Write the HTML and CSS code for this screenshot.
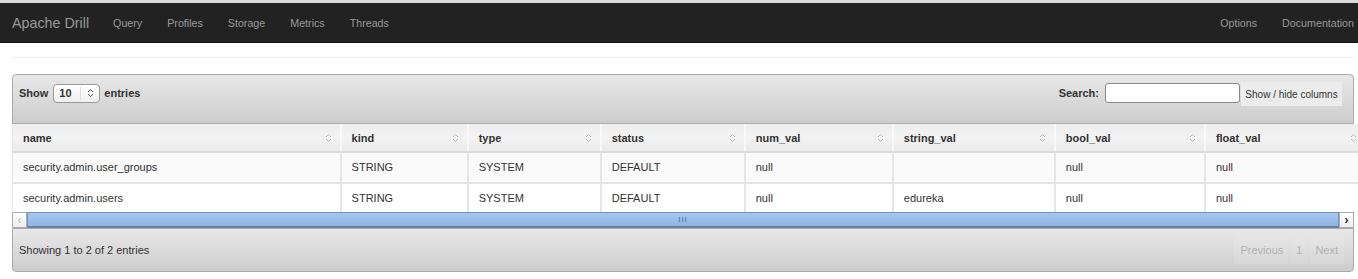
FILE: index.html
```html
<!DOCTYPE html>
<html lang="en">
<head>
    <meta charset="UTF-8">
    <title>Apache Drill - Options</title>
    <link rel="stylesheet" href="styles.css">
</head>
<body>
    <div class="navbar">
        <a class="brand" href="#">Apache Drill</a>
        <ul class="nav">
            <li><a href="#">Query</a></li>
            <li><a href="#">Profiles</a></li>
            <li><a href="#">Storage</a></li>
            <li><a href="#">Metrics</a></li>
            <li><a href="#">Threads</a></li>
        </ul>
        <ul class="nav nav-right">
            <li><a href="#">Options</a></li>
            <li><a href="#">Documentation</a></li>
        </ul>
    </div>

    <div class="container">
        <hr class="rule">

        <div class="dt-wrapper">
            <div class="toolbar toolbar-top">
                <div class="length">
                    <span>Show</span>
                    <span class="select">
                        <span class="select-value">10</span>
                        <span class="select-arrow">
                            <svg width="7" height="10" viewBox="0 0 7 10"><path d="M1 4 L3.5 1.5 L6 4 M1 6 L3.5 8.5 L6 6" stroke="#555" stroke-width="1" fill="none"/></svg>
                        </span>
                    </span>
                    <span>entries</span>
                </div>
                <div class="filter">
                    <label>Search:</label>
                    <input type="text" class="search">
                    <button class="colvis">Show / hide columns</button>
                </div>
            </div>

            <div class="scroll-body">
                <table class="options">
                    <thead>
                        <tr>
                            <th class="c-name">name<i class="sort"></i></th>
                            <th class="c-kind">kind<i class="sort"></i></th>
                            <th class="c-type">type<i class="sort"></i></th>
                            <th class="c-status">status<i class="sort"></i></th>
                            <th class="c-num">num_val<i class="sort"></i></th>
                            <th class="c-string">string_val<i class="sort"></i></th>
                            <th class="c-bool">bool_val<i class="sort"></i></th>
                            <th class="c-float">float_val<i class="sort"></i></th>
                        </tr>
                    </thead>
                    <tbody>
                        <tr class="odd">
                            <td>security.admin.user_groups</td>
                            <td>STRING</td>
                            <td>SYSTEM</td>
                            <td>DEFAULT</td>
                            <td>null</td>
                            <td></td>
                            <td>null</td>
                            <td>null</td>
                        </tr>
                        <tr class="even">
                            <td>security.admin.users</td>
                            <td>STRING</td>
                            <td>SYSTEM</td>
                            <td>DEFAULT</td>
                            <td>null</td>
                            <td>edureka</td>
                            <td>null</td>
                            <td>null</td>
                        </tr>
                    </tbody>
                </table>
            </div>

            <div class="hscroll">
                <span class="hs-btn hs-left">&lsaquo;</span>
                <span class="hs-thumb"><span class="grip">III</span></span>
                <span class="hs-btn hs-right">&rsaquo;</span>
            </div>

            <div class="toolbar toolbar-bottom">
                <div class="info">Showing 1 to 2 of 2 entries</div>
                <div class="paginate">
                    <span class="pg">Previous</span><span class="pg">1</span><span class="pg">Next</span>
                </div>
            </div>
        </div>
    </div>

    <script>
        // sort icons are the same everywhere, fill them in once
        document.querySelectorAll('.sort').forEach(function(el) {
            el.innerHTML = '<svg width="7" height="10" viewBox="0 0 7 10"><path d="M1 4 L3.5 1.5 L6 4 M1 6 L3.5 8.5 L6 6" stroke="#bbb" stroke-width="1" fill="none"/></svg>';
        });
    </script>
</body>
</html>
```

FILE: styles.css
```css
html, body {
    margin: 0;
    padding: 0;
    overflow: hidden;
}
body {
    font-family: 'Liberation Sans', Arial, Helvetica, sans-serif;
    font-size: 11px;
    color: #333;
    background-color: #fff;
    border-top: 3px solid #dcdcdc;
}
.navbar {
    display: flex;
    align-items: center;
    height: 40px;
    background-color: #222;
    border-bottom: 1px solid #111;
    box-sizing: border-box;
    padding: 0 4px 0 12px;
}
.brand {
    color: #999;
    font-size: 14.3px;
    text-decoration: none;
    margin-right: 11.5px;
}
.nav {
    display: flex;
    list-style: none;
    margin: 0;
    padding: 0;
}
.nav li a {
    display: block;
    color: #999;
    text-decoration: none;
    font-size: 10.7px;
    padding: 0 12.5px;
}
.nav-right {
    margin-left: auto;
}
.nav-right li:last-child a {
    padding-right: 0;
}
.container {
    padding: 0 4px 0 12px;
}
.rule {
    border: 0;
    border-top: 1px solid #eee;
    margin: 14px 0 16px;
}
.dt-wrapper {
    width: 1342px;
}
.toolbar {
    display: flex;
    justify-content: space-between;
    border: 1px solid #aaa;
    background: linear-gradient(#e8e8e8, #cdcdcd);
    box-sizing: border-box;
}
.toolbar-top {
    height: 50px;
    border-radius: 4px 4px 0 0;
    padding: 8px 11px 0 6px;
    align-items: flex-start;
}
.toolbar-bottom {
    height: 44px;
    border-radius: 0 0 4px 4px;
    padding: 0 9px 0 6px;
    align-items: center;
}
.length, .filter {
    display: flex;
    align-items: center;
    font-weight: bold;
    height: 20px;
}
.select {
    display: inline-flex;
    align-items: center;
    width: 47px;
    height: 19px;
    margin: 0 4px 0 5px;
    border: 1px solid #999;
    border-radius: 4px;
    background: linear-gradient(#fff, #f0f0f0);
    box-sizing: border-box;
}
.select-value {
    width: 26px;
    padding-left: 5px;
    box-sizing: border-box;
}
.select-arrow {
    display: flex;
    justify-content: center;
    align-items: center;
    flex: 1;
    height: 13px;
    border-left: 1px solid #ddd;
}
.filter label {
    margin-right: 6px;
}
.search {
    width: 135px;
    height: 20px;
    border: 1px solid #888;
    border-radius: 3px;
    box-sizing: border-box;
    padding: 0 4px;
    font-family: inherit;
}
.colvis {
    align-self: flex-start;
    margin: -1px 0 0 1px;
    height: 24px;
    width: 101px;
    padding: 0;
    border: 0;
    background-color: #ececec;
    color: #333;
    font-family: inherit;
    font-size: 10px;
    cursor: pointer;
}
.scroll-body {
    width: 1346px;
    overflow: visible;
}
.options {
    border-collapse: collapse;
    table-layout: fixed;
    width: 1353px;
}
.options th, .options td {
    text-align: left;
    padding: 0 10px;
    border-left: 2px solid #e6e6e6;
    white-space: nowrap;
    box-sizing: border-box;
}
.options th:first-child, .options td:first-child {
    border-left: 1px solid #e6e6e6;
}
.options th {
    position: relative;
    height: 28px;
    font-weight: bold;
    background: linear-gradient(#ededed, #f3f3f3 50%, #ebebeb);
    border-bottom: 2px solid #dedede;
    border-left-color: #f8f8f8;
}
.sort {
    position: absolute;
    right: 8px;
    top: 9px;
    line-height: 0;
}
.options td {
    height: 31px;
    padding-bottom: 1px;
    border-bottom: 2px solid #e4e4e4;
}
.options tr.odd td {
    background-color: #fafafa;
}
.options tr.even td {
    height: 29px;
    padding-bottom: 0;
    background-color: #fff;
    border-bottom: 0;
}
.c-name { width: 328px; }
.c-kind { width: 127px; }
.c-type { width: 133px; }
.c-status { width: 144px; }
.c-num { width: 148px; }
.c-string { width: 162px; }
.c-bool { width: 150px; }
.c-float { width: 160px; }
.hscroll {
    display: flex;
    height: 16px;
    background-color: #ddd;
}
.hs-btn {
    width: 15px;
    display: flex;
    align-items: center;
    justify-content: center;
    background: linear-gradient(#fff, #eee);
    border: 1px solid #aaa;
    box-sizing: border-box;
    font-size: 12px;
    line-height: 1;
}
.hs-left {
    color: #bbb;
    border-radius: 2px 0 0 2px;
}
.hs-right {
    color: #222;
    font-weight: bold;
}
.hs-thumb {
    flex: 1;
    display: flex;
    align-items: center;
    justify-content: center;
    background: linear-gradient(#a9c7ee, #8fb4e3);
    border: 1px solid #6f93c6;
    border-bottom: 2px solid #6b7f9c;
    box-sizing: border-box;
}
.grip {
    color: #4d6e9c;
    font-size: 8px;
    letter-spacing: 1px;
}
.info {
    font-weight: normal;
}
.paginate {
    display: flex;
    height: 27px;
}
.pg {
    display: flex;
    align-items: center;
    padding: 0 6px;
    margin-left: 1px;
    color: #b3b3b3;
    background-color: rgba(255, 255, 255, 0.12);
}
```
